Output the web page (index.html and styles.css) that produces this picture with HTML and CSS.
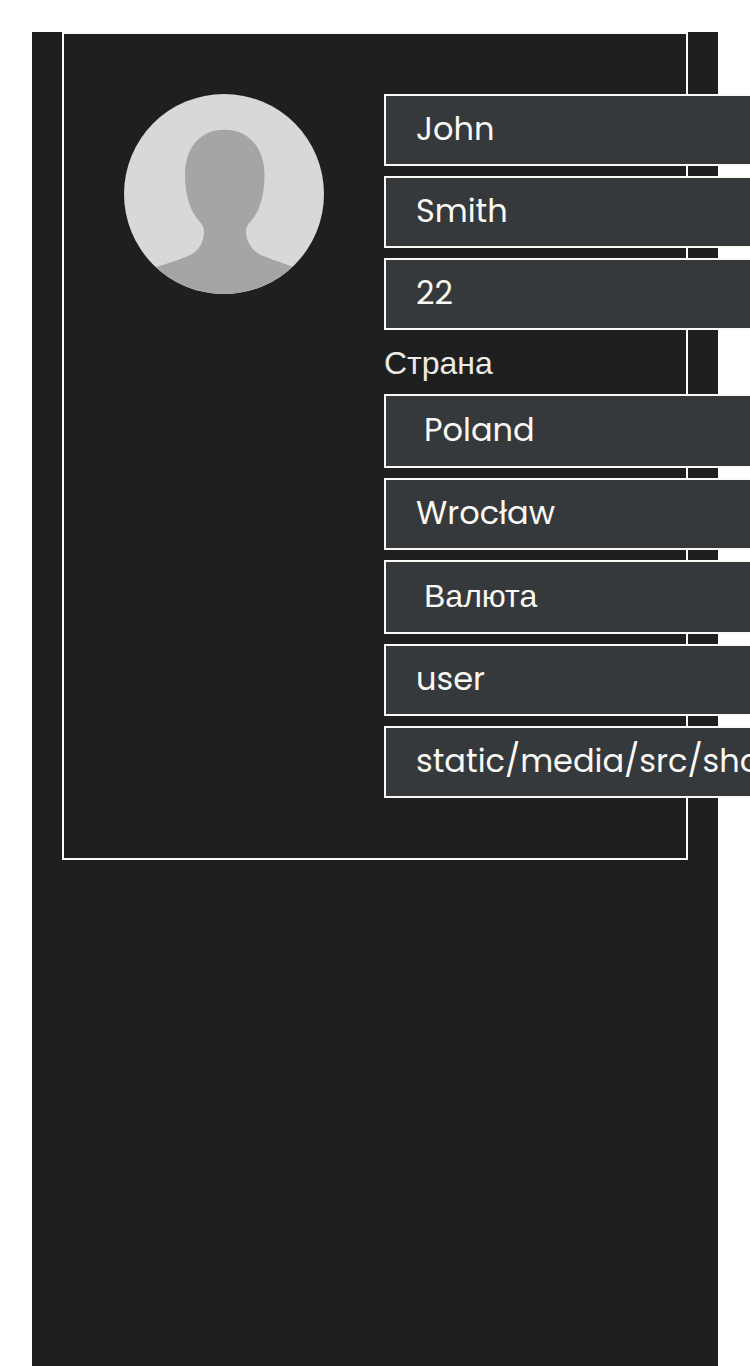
FILE: index.html
```html
<!DOCTYPE html>
<html lang="ru">
<head>
<meta charset="utf-8">
<meta name="viewport" content="width=device-width, initial-scale=1">
<title>John Smith</title>
<link rel="stylesheet" href="styles.css">
</head>
<body>
<main class="page">
  <form class="profile">
    <svg class="avatar" viewBox="0 0 200 200" role="img" aria-label="John Smith">
      <rect class="avatar-bg" width="200" height="200"/>
      <path class="avatar-person" d="M100.500 35.800C76 35.800 61 54 61 81C61 103 67 118 75 127C79 131 80 134 80 138C80 147 75 156 68 160C61 164 48 168 32 173L20 178V200H180V178L169 173C153 167 141 163 135 160C128 156 122 147 122 137C122 134 123 131 127 127C135 118 140.500 103 140.500 81C140.500 54 125 35.800 100.500 35.800Z"/>
    </svg>
    <div class="fields">
      <input class="field" type="text" aria-label="Имя" value="John">
      <input class="field" type="text" aria-label="Фамилия" value="Smith">
      <input class="field" type="text" inputmode="numeric" aria-label="Возраст" value="22">
      <label class="label" for="country">Страна</label>
      <select class="field field-select" id="country"><option>Poland</option></select>
      <input class="field" type="text" aria-label="Город" value="Wrocław">
      <select class="field field-select field-currency" aria-label="Валюта"><option>Валюта</option></select>
      <input class="field" type="text" aria-label="Логин" value="user">
      <input class="field" type="text" aria-label="Аватар" value="static/media/src/shared">
    </div>
  </form>
</main>
</body>
</html>
```
FILE: styles.css
```css
* {
  box-sizing: border-box;
}

html {
  overflow: hidden auto;
  scrollbar-width: none;
}

body {
  margin: 0;
  padding: 32px 32px 0;
  background: #fff;
  color: #eeebe4;
  font: 32px/44px "Liberation Sans", Arial, sans-serif;
}

.page {
  min-height: calc(100vh - 32px);
  padding: 0 30px;
  background: #1e1f21;
}

.profile {
  display: flex;
  align-items: flex-start;
  gap: 60px;
  padding: 60px;
  border: 2px solid #faf9f5;
}

.avatar {
  flex: none;
  width: 200px;
  height: 200px;
  border-radius: 50%;
}

.avatar-bg {
  fill: #d8d8d8;
}

.avatar-person {
  fill: #a5a5a5;
}

.fields {
  display: flex;
  flex: 1 0 440px;
  flex-direction: column;
  gap: 10px;
}

.label {
  height: 44px;
  padding-top: 1px;
}

.field {
  width: 100%;
  height: 72px;
  margin: 0;
  padding: 10px 30px 12px;
  border: 2px solid #faf9f5;
  border-radius: 0;
  outline: 0;
  appearance: none;
  background: #36393c;
  color: #faf9f5;
  font: 32px/48px Poppins, Inter, sans-serif;
}

.field-select {
  height: 74px;
  padding: 10px 38px 12px;
}

.field-currency {
  font-family: "Liberation Sans", Arial, sans-serif;
}
```
